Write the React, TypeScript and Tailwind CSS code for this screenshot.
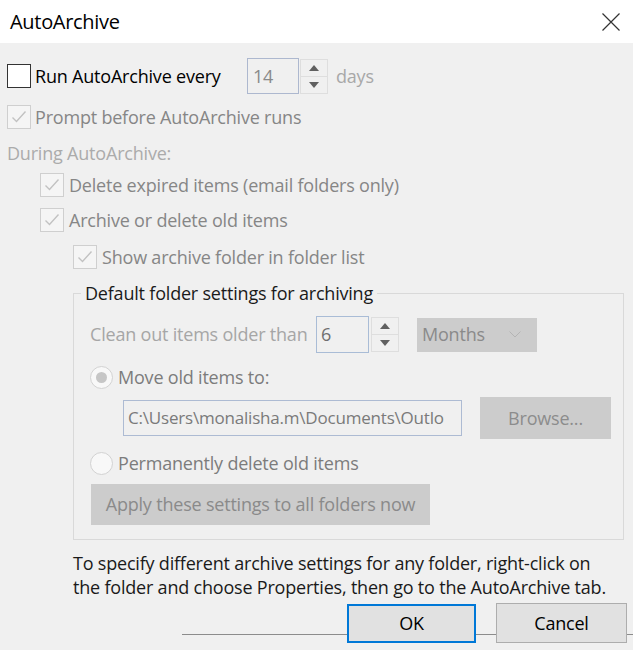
import React from 'react';

// Outlook "AutoArchive" options dialog, disabled state.

function CheckBox({ checked = false, disabled = false }: { checked?: boolean; disabled?: boolean }) {
  return (
    <div
      className={
        disabled
          ? 'w-[24px] h-[24px] shrink-0 border border-[#cfcfcf] bg-[#f5f5f5] flex items-center justify-center'
          : 'w-[24px] h-[24px] shrink-0 border border-[#333333] bg-white flex items-center justify-center'
      }
    >
      {checked && (
        <svg width="22" height="22" viewBox="0 0 22 22">
          <path d="M4.5 11.5 L8.5 15.5 L17.5 5.5" fill="none" stroke="#c2c2c2" strokeWidth="1.4" />
        </svg>
      )}
    </div>
  );
}

function Radio({ selected = false }: { selected?: boolean }) {
  return (
    <div className="w-[23px] h-[23px] shrink-0 rounded-full border border-[#d2d2d2] bg-[#f8f8f8] flex items-center justify-center">
      {selected && <div className="w-[11px] h-[11px] rounded-full bg-[#c6c6c6]" />}
    </div>
  );
}

function Spinner() {
  return (
    <div className="w-[28px] h-[35px] border border-[#dedede] flex flex-col">
      <div className="flex-1 flex items-center justify-center border-b border-[#dedede]">
        <svg width="10" height="6" viewBox="0 0 10 6">
          <path d="M0 6 L5 0 L10 6 Z" fill="#606060" />
        </svg>
      </div>
      <div className="flex-1 flex items-center justify-center">
        <svg width="10" height="6" viewBox="0 0 10 6">
          <path d="M0 0 L10 0 L5 6 Z" fill="#606060" />
        </svg>
      </div>
    </div>
  );
}

export default function App() {
  return (
    <div className="w-[633px] h-[650px] overflow-hidden bg-[#f0f0f0] font-['Open_Sans','Noto_Sans',sans-serif] text-[18px] tracking-[-0.2px]">
      <div className="h-[43px] bg-white flex items-center justify-between pl-[10px] pr-[13px]">
        <span className="text-[20px] tracking-[-0.3px] text-black">AutoArchive</span>
        <svg width="18" height="18" viewBox="0 0 18 18">
          <path d="M0.5 0.5 L17.5 17.5 M17.5 0.5 L0.5 17.5" stroke="#333333" strokeWidth="1.2" />
        </svg>
      </div>

      <div className="pt-[15px]">
        <div className="h-[36px] flex items-center pl-[7px]">
          <CheckBox />
          <span className="ml-[4px] w-[212px] text-black">Run AutoArchive every</span>
          <div className="w-[52px] h-[36px] border border-[#adb8cf] flex items-center pl-[5px] text-[#8a8a8a]">14</div>
          <div className="ml-[1px]">
            <Spinner />
          </div>
          <span className="ml-[8px] text-[#a8a8a8]">days</span>
        </div>

        <div className="h-[46px] flex items-center pl-[7px]">
          <CheckBox checked disabled />
          <span className="ml-[4px] text-[#868686]">Prompt before AutoArchive runs</span>
        </div>

        <div className="h-[26px] flex items-center pl-[7px] text-[#ababab]">During AutoArchive:</div>

        <div className="h-[38px] flex items-center pl-[40px]">
          <CheckBox checked disabled />
          <span className="ml-[5px] text-[#868686]">Delete expired items (email folders only)</span>
        </div>

        <div className="h-[32px] flex items-center pl-[40px]">
          <CheckBox checked disabled />
          <span className="ml-[5px] text-[#868686]">Archive or delete old items</span>
        </div>

        <div className="h-[42px] flex items-center pl-[73px]">
          <CheckBox checked disabled />
          <span className="ml-[5px] text-[#868686]">Show archive folder in folder list</span>
        </div>

        <fieldset className="ml-[73px] w-[551px] h-[259px] border border-[#d9d9d9] p-0 m-0 mt-[3px]">
          <legend className="ml-[7px] px-[4px] text-[#1a1a1a] leading-[24px]">Default folder settings for archiving</legend>

          <div className="pl-[16px]">
            <div className="mt-[11px] h-[37px] flex items-center">
              <span className="w-[226px] text-[#a6a6a6]">Clean out items older than</span>
              <div className="w-[53px] h-[37px] border border-[#a9bcd6] flex items-center pl-[4px] text-[#6f6f6f]">6</div>
              <div className="ml-[2px]">
                <Spinner />
              </div>
              <div className="ml-[18px] w-[120px] h-[34px] bg-[#cccccc] flex items-center justify-between pl-[5px] pr-[16px] text-[#8a8a8a]">
                <span>Months</span>
                <svg width="12" height="7" viewBox="0 0 12 7">
                  <path d="M0.5 0.5 L6 6 L11.5 0.5" fill="none" stroke="#b4b4b4" strokeWidth="1" />
                </svg>
              </div>
            </div>

            <div className="h-[44px] pt-[4px] flex items-center">
              <Radio selected />
              <span className="ml-[5px] text-[#7c7c7c]">Move old items to:</span>
            </div>

            <div className="h-[42px] flex items-center">
              <div className="ml-[33px] w-[339px] h-[36px] border border-[#adbbd3] flex items-center pl-[4px] overflow-hidden whitespace-nowrap text-[17px] text-[#7a7a7a]">
                C:\Users\monalisha.m\Documents\Outlo
              </div>
              <div className="ml-[18px] w-[131px] h-[42px] bg-[#cccccc] flex items-center justify-center text-[#8c8c8c]">
                Browse...
              </div>
            </div>

            <div className="h-[45px] pt-[3px] flex items-center">
              <Radio />
              <span className="ml-[5px] text-[#7c7c7c]">Permanently delete old items</span>
            </div>

            <div className="ml-[1px] w-[339px] h-[41px] bg-[#cccccc] flex items-center justify-center text-[#8a8a8a]">
              Apply these settings to all folders now
            </div>
          </div>
        </fieldset>

        <p className="mt-[11px] pl-[73px] leading-[24px] text-[#1a1a1a]">
          To specify different archive settings for any folder, right-click on
          <br />
          the folder and choose Properties, then go to the AutoArchive tab.
        </p>

        <div className="relative mt-[4px] h-[41px] flex items-start">
          <div className="absolute left-[182px] right-0 top-[31px] h-px bg-[#8c8c8c]" />
          <div className="relative ml-[347px] mt-[1px] w-[129px] h-[39px] border-2 border-[#0078d7] bg-[#e1e1e1] flex items-center justify-center text-black">
            OK
          </div>
          <div className="relative ml-[20px] w-[131px] h-[40px] border border-[#adadad] bg-[#e1e1e1] flex items-center justify-center text-black">
            Cancel
          </div>
        </div>
      </div>
    </div>
  );
}
